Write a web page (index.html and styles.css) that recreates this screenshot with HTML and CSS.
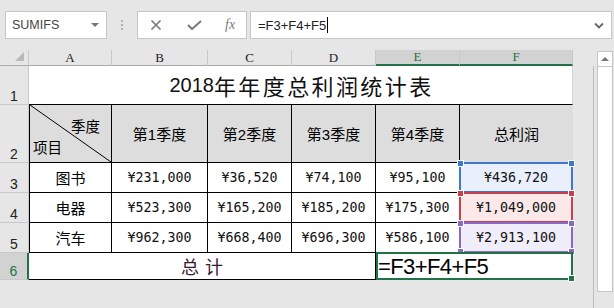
FILE: index.html
```html
<!DOCTYPE html>
<html lang="zh-CN">
<head>
    <meta charset="UTF-8">
    <title>2018年年度总利润统计表</title>
    <link rel="stylesheet" href="styles.css">
</head>
<body>

    <!-- Formula bar -->
    <div class="toolbar">
        <div class="namebox">
            <span>SUMIFS</span>
            <i class="caret"></i>
        </div>
        <div class="grip"><i></i><i></i><i></i></div>
        <div class="fx-buttons">
            <svg width="12" height="10" viewBox="0 0 12 10"><path d="M1.5 0.5 L10.5 9.5 M10.5 0.5 L1.5 9.5" stroke="#7a7a7a" stroke-width="1.6" fill="none"/></svg>
            <svg width="15" height="10" viewBox="0 0 15 10"><path d="M1 5 L5 9 L14 1" stroke="#7a7a7a" stroke-width="2" fill="none"/></svg>
            <span class="fx">fx</span>
        </div>
        <div class="formula">
            <span class="formula-text">=F3+F4+F5</span><span class="cursor"></span>
            <svg class="chevron" width="10" height="7" viewBox="0 0 10 7"><path d="M1 1.5 L5 5.5 L9 1.5" stroke="#666" stroke-width="1.8" fill="none"/></svg>
        </div>
    </div>

    <div class="workspace">
        <div class="sheet">
            <!-- column headers -->
            <div class="ch corner"><i class="tri"></i></div>
            <div class="ch">A</div>
            <div class="ch">B</div>
            <div class="ch">C</div>
            <div class="ch">D</div>
            <div class="ch sel">E</div>
            <div class="ch sel">F</div>

            <!-- row 1 -->
            <div class="rh">1</div>
            <div class="c title"><span class="num">2018</span>年年度总利润统计表</div>

            <!-- row 2 -->
            <div class="rh">2</div>
            <div class="c head first diag">
                <svg class="slash" viewBox="0 0 100 100" preserveAspectRatio="none"><line x1="0" y1="0" x2="100" y2="100" stroke="#000" stroke-width="1" vector-effect="non-scaling-stroke"/></svg>
                <span class="diag-top">季度</span>
                <span class="diag-bottom">项目</span>
            </div>
            <div class="c head">第1季度</div>
            <div class="c head">第2季度</div>
            <div class="c head">第3季度</div>
            <div class="c head">第4季度</div>
            <div class="c head last">总利润</div>

            <!-- row 3 -->
            <div class="rh">3</div>
            <div class="c first">图书</div>
            <div class="c money">¥231,000</div>
            <div class="c money">¥36,520</div>
            <div class="c money">¥74,100</div>
            <div class="c money">¥95,100</div>
            <div class="c money ref blue">¥436,720<b class="box"><i class="h tl"></i><i class="h tr"></i></b></div>

            <!-- row 4 -->
            <div class="rh">4</div>
            <div class="c first">电器</div>
            <div class="c money">¥523,300</div>
            <div class="c money">¥165,200</div>
            <div class="c money">¥185,200</div>
            <div class="c money">¥175,300</div>
            <div class="c money ref red">¥1,049,000<b class="box"><i class="h tl"></i><i class="h tr"></i></b></div>

            <!-- row 5 -->
            <div class="rh">5</div>
            <div class="c first">汽车</div>
            <div class="c money">¥962,300</div>
            <div class="c money">¥668,400</div>
            <div class="c money">¥696,300</div>
            <div class="c money">¥586,100</div>
            <div class="c money ref purple">¥2,913,100<b class="box"><i class="h tl"></i><i class="h tr"></i><i class="h bl"></i><i class="h br"></i></b></div>

            <!-- row 6 -->
            <div class="rh sel">6</div>
            <div class="c total">总计</div>
            <div class="c ref editing">=F3+F4+F5<b class="box"><i class="h br"></i></b></div>
        </div>

        <div class="vscroll">
            <div class="vline"></div>
            <div class="track">
                <div class="up"><i></i></div>
            </div>
        </div>
    </div>

</body>
</html>
```

FILE: styles.css
```css
body {
    margin: 0;
    background-color: #e6e6e6;
    font-family: "Liberation Sans", "Noto Sans CJK SC", sans-serif;
    color: #000;
}

/* ---------- formula bar ---------- */

.toolbar {
    height: 50px;
    box-sizing: border-box;
    padding-top: 11px;
    display: flex;
    align-items: flex-start;
}

.namebox {
    margin-left: 5px;
    width: 102px;
    height: 28px;
    box-sizing: border-box;
    border: 1px solid #c6c6c6;
    background-color: #fff;
    display: flex;
    align-items: center;
    justify-content: space-between;
    padding: 0 7px 0 6px;
    font-size: 12.5px;
    color: #444;
}

.caret {
    width: 0;
    height: 0;
    border-left: 4px solid transparent;
    border-right: 4px solid transparent;
    border-top: 4px solid #777;
}

.grip {
    width: 30px;
    height: 28px;
    display: flex;
    flex-direction: column;
    align-items: center;
    justify-content: center;
    gap: 2px;
}

.grip i {
    width: 2px;
    height: 2px;
    background-color: #b0b0b0;
}

.fx-buttons {
    width: 110px;
    height: 28px;
    box-sizing: border-box;
    border: 1px solid #c6c6c6;
    background-color: #fff;
    display: flex;
    align-items: center;
    padding: 0 0 0 12px;
    gap: 25px;
}

.fx {
    font-family: "Liberation Serif", serif;
    font-style: italic;
    font-size: 14px;
    color: #7a7a7a;
    margin-left: -2px;
}

.formula {
    margin-left: 3px;
    width: 362px;
    height: 28px;
    box-sizing: border-box;
    border: 1px solid #c6c6c6;
    background-color: #fff;
    display: flex;
    align-items: center;
    padding-left: 7px;
    font-size: 13px;
    color: #222;
}

.cursor {
    width: 1px;
    height: 16px;
    background-color: #000;
    margin-left: 1px;
}

.chevron {
    margin-left: auto;
    margin-right: 7px;
}

/* ---------- sheet ---------- */

.workspace {
    display: flex;
}

.sheet {
    display: grid;
    grid-template-columns: 29px 83px 96px 84px 84px 84px 113px;
    grid-template-rows: 16px 39px 58px 30px 30px 30px 27px;
    width: 573px;
}

.ch {
    box-sizing: border-box;
    background-color: #e6e6e6;
    border-right: 1px solid #c8c8c8;
    border-bottom: 1px solid #ababab;
    display: flex;
    align-items: center;
    justify-content: center;
    font-family: "Liberation Serif", serif;
    font-size: 13px;
    color: #222;
}

.ch.sel {
    background-color: #d2d2d2;
    color: #217346;
    border-bottom: 2px solid #217346;
}

.corner {
    position: relative;
}

.corner .tri {
    position: absolute;
    right: 4px;
    bottom: 4px;
    width: 0;
    height: 0;
    border-left: 9px solid transparent;
    border-bottom: 9px solid #b9b9b9;
}

.rh {
    box-sizing: border-box;
    background-color: #e6e6e6;
    border-right: 1px solid #c8c8c8;
    border-bottom: 1px solid #c8c8c8;
    display: flex;
    align-items: flex-end;
    justify-content: center;
    padding-bottom: 1px;
    font-size: 14px;
    line-height: 1;
    color: #222;
}

.rh.sel {
    background-color: #d2d2d2;
    color: #217346;
    border-right: 2px solid #217346;
}

.c {
    box-sizing: border-box;
    background-color: #fff;
    border-right: 1px solid #000;
    border-bottom: 1px solid #000;
    display: flex;
    align-items: center;
    justify-content: center;
    font-size: 15px;
    white-space: nowrap;
}

.c.first {
    border-left: 1px solid #000;
}

.title {
    grid-column: 2 / span 6;
    border-right: 1px solid #d4d4d4;
    font-size: 22px;
    letter-spacing: 2.4px;
    color: #111;
    padding-left: 2px;
}

.title .num {
    font-size: 20px;
    letter-spacing: 0;
}

.head {
    background-color: #dddddd;
}

.head.last {
    border-right: 0;
}

.diag {
    position: relative;
    flex-direction: column;
    align-items: stretch;
    justify-content: space-between;
    padding: 10px 11px 9px 3px;
}

.slash {
    position: absolute;
    left: 0;
    top: 0;
    width: 100%;
    height: 100%;
}

.diag-top {
    align-self: flex-end;
    font-size: 14.5px;
}

.diag-bottom {
    align-self: flex-start;
    font-size: 14.5px;
}

.money {
    font-family: "DejaVu Sans Mono", monospace;
    font-size: 13.3px;
    color: #111;
}

.total {
    grid-column: 2 / span 4;
    font-size: 18px;
    letter-spacing: 6px;
    padding-left: 6px;
    color: #3a1a30;
}

.editing {
    grid-column: 6 / span 2;
    justify-content: flex-start;
    align-items: flex-end;
    padding: 0 0 1px 2px;
    font-size: 22px;
    letter-spacing: -0.6px;
    line-height: 1;
}

/* reference highlight boxes drawn over the cells */

.ref {
    position: relative;
}

.ref .box {
    position: absolute;
    left: -1px;
    top: -1px;
    right: -1px;
    bottom: -1px;
    border: 2px solid;
    z-index: 1;
}

.ref .h {
    position: absolute;
    width: 5px;
    height: 5px;
    border: 1px solid #fff;
    background-color: currentColor;
}

.h.tl { left: -4px; top: -4px; }
.h.tr { right: -4px; top: -4px; }
.h.bl { left: -4px; bottom: -4px; }
.h.br { right: -4px; bottom: -4px; }

.blue { background-color: #e9f0fb; }
.blue .box { color: #3f76d0; border-color: #3f76d0; }

.red { background-color: #fbe9ea; }
.red .box { color: #c8404b; border-color: #c8404b; }

.purple { background-color: #f1eefb; }
.purple .box { color: #8b68c6; border-color: #8b68c6; }

.editing .box {
    left: 0;
    color: #217346;
    border-color: #217346;
}

/* ---------- vertical scrollbar ---------- */

.vscroll {
    margin-left: 20px;
    display: flex;
}

.vline {
    width: 1px;
    height: 242px;
    margin-top: 16px;
    background-color: #bdbdbd;
}

.track {
    margin-left: 3px;
    margin-top: 1px;
    width: 16px;
    height: 241px;
    box-sizing: border-box;
    border: 1px solid #c6c6c6;
    background-color: #fff;
}

.up {
    height: 14px;
    border-bottom: 1px solid #c6c6c6;
    display: flex;
    align-items: center;
    justify-content: center;
}

.up i {
    width: 0;
    height: 0;
    border-left: 4px solid transparent;
    border-right: 4px solid transparent;
    border-bottom: 4px solid #777;
}
```
